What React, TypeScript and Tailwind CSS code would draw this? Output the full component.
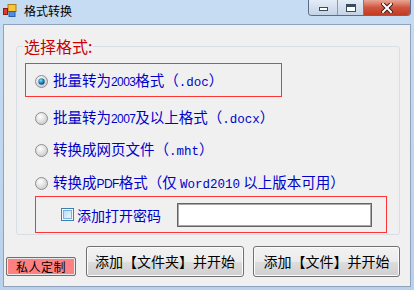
import type { ReactNode } from "react";

const CJK = "font-['Noto_Sans_CJK_SC','Noto_Sans',sans-serif]";

function AppIcon() {
  return (
    <svg width="14" height="14" viewBox="0 0 14 14">
      <rect x="5" y="0.5" width="8" height="7" fill="#f7c43a" stroke="#b07a10" />
      <rect x="6" y="7.5" width="6" height="5" fill="#4f8fe0" stroke="#2a5fa8" />
      <rect x="0.5" y="4.5" width="4" height="6" fill="#e0382a" stroke="#8e1a12" />
    </svg>
  );
}

function CaptionButtons() {
  return (
    <div className="ml-auto mr-[3px] flex h-[16px] overflow-hidden rounded-b-[4px] border border-t-0 border-[#5b6c86]">
      <div className="flex w-[29px] items-center justify-center border-r border-[#8a9ab0] bg-gradient-to-b from-[#e4ecf7] to-[#c3d3e6]">
        <div className="mt-[3px] h-[4px] w-[9px] border border-[#3c4a5e] bg-white" />
      </div>
      <div className="flex w-[26px] items-center justify-center border-r border-[#6e7e96] bg-gradient-to-b from-[#e4ecf7] to-[#c3d3e6]">
        <div className="h-[8px] w-[10px] border border-[#3c4a5e] border-t-[3px] bg-white" />
      </div>
      <div className="flex w-[46px] items-center justify-center bg-gradient-to-b from-[#e8a595] via-[#d0553e] to-[#c33a22]">
        <svg width="12" height="10" viewBox="0 0 12 10">
          <path d="M2 1 L10 9 M10 1 L2 9" stroke="#3a1a14" strokeWidth="4" strokeLinecap="square" />
          <path d="M2 1 L10 9 M10 1 L2 9" stroke="#ffffff" strokeWidth="2" strokeLinecap="square" />
        </svg>
      </div>
    </div>
  );
}

function Radio({ checked }: { checked?: boolean }) {
  return (
    <svg width="13" height="13" viewBox="0 0 13 13" className="shrink-0">
      <defs>
        <radialGradient id="rg" cx="0.4" cy="0.35" r="0.7">
          <stop offset="0" stopColor="#ffffff" />
          <stop offset="1" stopColor="#c9c9c9" />
        </radialGradient>
        <radialGradient id="rd" cx="0.4" cy="0.35" r="0.7">
          <stop offset="0" stopColor="#8fe0ff" />
          <stop offset="0.5" stopColor="#1d8bc6" />
          <stop offset="1" stopColor="#0d3f73" />
        </radialGradient>
      </defs>
      <circle cx="6.5" cy="6.5" r="6" fill="url(#rg)" stroke="#8e8f8f" />
      {checked ? <circle cx="6.5" cy="6.5" r="3.2" fill="url(#rd)" /> : null}
    </svg>
  );
}

function CheckBox() {
  return (
    <svg width="13" height="13" viewBox="0 0 13 13" className="shrink-0">
      <defs>
        <linearGradient id="cb" x1="0" y1="0" x2="1" y2="1">
          <stop offset="0" stopColor="#b9dcf7" />
          <stop offset="1" stopColor="#e9f5fe" />
        </linearGradient>
      </defs>
      <rect x="0.5" y="0.5" width="12" height="12" fill="#f4f9fd" stroke="#3c7fb1" />
      <rect x="2.5" y="2.5" width="8" height="8" fill="url(#cb)" stroke="#79b1dc" />
    </svg>
  );
}

function Mono({ children }: { children: ReactNode }) {
  return (
    <span className="font-['Liberation_Mono',monospace] text-[12.5px]">{children}</span>
  );
}

function Num({ children }: { children: ReactNode }) {
  return (
    <span className="font-['Liberation_Sans',sans-serif] text-[12px] tracking-[-0.6px]">
      {children}
    </span>
  );
}

function Label({ children }: { children: ReactNode }) {
  return (
    <span className={`${CJK} whitespace-nowrap text-[14.5px] leading-5 text-[#0000cc]`}>
      {children}
    </span>
  );
}

function WinButton({ w, children }: { w: string; children: ReactNode }) {
  return (
    <div
      className={`${w} flex h-[31px] items-center justify-center rounded-[3px] border border-[#707070] bg-[linear-gradient(#f2f2f2_0%,#ebebeb_50%,#dddddd_51%,#cfcfcf_100%)] shadow-[inset_0_0_0_1px_#fcfcfc] ${CJK} text-[14px] text-black`}
    >
      {children}
    </div>
  );
}

export default function App() {
  return (
    <div className="flex h-[290px] w-[414px] flex-col overflow-hidden bg-gradient-to-b from-[#c6dcf2] to-[#b9d1ec]">
      <div className="flex h-6 shrink-0 items-start">
        <div className="ml-[3px] mt-[4px]">
          <AppIcon />
        </div>
        <span className={`${CJK} ml-[7px] mt-[3px] text-[12px] leading-4 text-black`}>
          格式转换
        </span>
        <CaptionButtons />
      </div>

      <div className="mx-[3px] mb-[3px] flex flex-1 flex-col border border-[#8fa3bd] bg-[#f0f0f0]">
        <fieldset className="ml-3 mr-[10px] mt-[11px] rounded-[3px] border border-[#d5dfe5] pb-px">
          <legend className={`${CJK} ml-[6px] px-px text-[16px] leading-5 text-[#cc0000]`}>
            选择格式:
          </legend>

          <div className="ml-2 mt-[7px] flex h-[34px] w-[257px] items-center gap-[5px] border border-[#ff3333] pl-[9px] pt-[3px]">
            <Radio checked />
            <Label>
              批量转为<Num>2003</Num>格式（<Mono>.doc</Mono>）
            </Label>
          </div>

          <div className="ml-[18px] mt-[11px] flex h-5 items-center gap-[5px]">
            <Radio />
            <Label>
              批量转为<Num>2007</Num>及以上格式（<Mono>.docx</Mono>）
            </Label>
          </div>

          <div className="ml-[18px] mt-3 flex h-5 items-center gap-[5px]">
            <Radio />
            <Label>
              转换成网页文件（<Mono>.mht</Mono>）
            </Label>
          </div>

          <div className="ml-[18px] mt-[13px] flex h-5 items-center gap-[5px]">
            <Radio />
            <Label>
              转换成<Num>PDF</Num>格式（仅 <Mono>Word2010</Mono> 以上版本可用）
            </Label>
          </div>

          <div className="ml-[18px] mt-[3px] flex h-[37px] w-[352px] items-center border border-[#ff3333] pl-[25px]">
            <CheckBox />
            <span className={`${CJK} ml-[3px] whitespace-nowrap text-[14px] leading-5 text-[#0000cc]`}>
              添加打开密码
            </span>
            <div className="ml-4 h-[24px] w-[195px] border border-[#646464] bg-white shadow-[inset_0_0_0_1px_#a8a8a8]" />
          </div>
        </fieldset>

        <div className="ml-[2px] mt-[11px] flex items-end">
          <div className="mb-px flex h-[19px] w-[70px] items-center justify-center rounded-[2px] border border-[#707070] bg-[#ff8080] shadow-[inset_0_0_0_1px_#e8e8e8]">
            <span className={`${CJK} text-[12px] leading-4 tracking-[0.5px] text-black`}>私人定制</span>
          </div>
          <div className="ml-[10px]">
            <WinButton w="w-[158px]">添加【文件夹】并开始</WinButton>
          </div>
          <div className="ml-[9px]">
            <WinButton w="w-[147px]">添加【文件】并开始</WinButton>
          </div>
        </div>
      </div>
    </div>
  );
}
